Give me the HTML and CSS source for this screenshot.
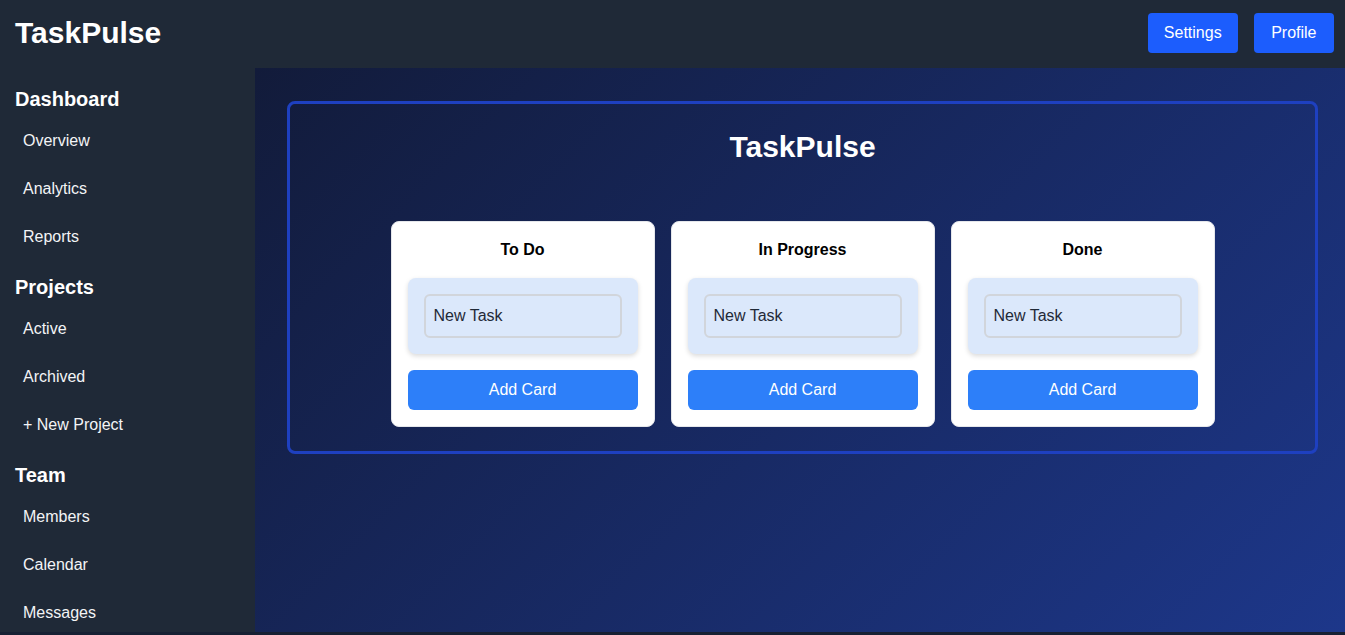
FILE: index.html
```html
<!DOCTYPE html>
<html lang="en">
<head>
<meta charset="utf-8">
<title>TaskPulse</title>
<link rel="stylesheet" href="styles.css">
</head>
<body>
<div class="app">
  <header class="topbar">
    <div class="brand">TaskPulse</div>
    <nav class="top-actions">
      <button class="top-btn">Settings</button>
      <button class="top-btn">Profile</button>
    </nav>
  </header>
  <div class="body-row">
    <aside class="sidebar">
      <h2 class="side-heading">Dashboard</h2>
      <ul class="side-list">
        <li>Overview</li>
        <li>Analytics</li>
        <li>Reports</li>
      </ul>
      <h2 class="side-heading">Projects</h2>
      <ul class="side-list">
        <li>Active</li>
        <li>Archived</li>
        <li>+ New Project</li>
      </ul>
      <h2 class="side-heading">Team</h2>
      <ul class="side-list">
        <li>Members</li>
        <li>Calendar</li>
        <li>Messages</li>
      </ul>
    </aside>
    <main class="main">
      <section class="board">
        <h1 class="board-title">TaskPulse</h1>
        <div class="columns">
          <div class="column">
            <h3 class="col-title">To Do</h3>
            <div class="task-card"><input class="task-input" type="text" value="New Task"></div>
            <button class="add-btn">Add Card</button>
          </div>
          <div class="column">
            <h3 class="col-title">In Progress</h3>
            <div class="task-card"><input class="task-input" type="text" value="New Task"></div>
            <button class="add-btn">Add Card</button>
          </div>
          <div class="column">
            <h3 class="col-title">Done</h3>
            <div class="task-card"><input class="task-input" type="text" value="New Task"></div>
            <button class="add-btn">Add Card</button>
          </div>
        </div>
      </section>
    </main>
  </div>
</div>
</body>
</html>
```
FILE: styles.css
```css
* { box-sizing: border-box; }
html, body {
  margin: 0;
  padding: 0;
  height: 100%;
}
body {
  background: #172033;
  font-family: "Liberation Sans", Arial, sans-serif;
  color: #fff;
  overflow: hidden;
}
.app {
  height: 632px;
  display: flex;
  flex-direction: column;
}
.topbar {
  height: 68px;
  flex: none;
  background: #1f2937;
  display: flex;
  align-items: center;
  justify-content: space-between;
  padding: 0 11px 0 15px;
}
.brand {
  font-size: 30px;
  font-weight: 700;
  color: #fff;
  margin-top: -2px;
}
.top-actions {
  display: flex;
  gap: 16px;
  margin-top: -2px;
}
.top-btn {
  height: 40px;
  padding: 0 16px;
  border: none;
  border-radius: 4px;
  background: #1c5dfd;
  color: #fff;
  font-family: inherit;
  font-size: 16px;
}
.top-btn:last-child { padding: 0 17.5px; }
.body-row {
  flex: 1;
  display: flex;
  min-height: 0;
}
.sidebar {
  width: 255px;
  flex: none;
  background: #1f2937;
  padding: 18px 15px 0;
}
.side-heading {
  margin: 0;
  font-size: 20px;
  font-weight: 700;
  line-height: 26px;
}
.side-list {
  list-style: none;
  margin: 5px 0 13px;
  padding: 0;
}
.side-list li {
  font-size: 16px;
  line-height: 18px;
  padding: 15px 8px;
  color: #f3f4f6;
}
.main {
  flex: 1;
  background: linear-gradient(135deg, #121b3a 0%, #1d378a 100%);
  padding: 33px 27px 0 32px;
}
.board {
  border: 3px solid #1e40c0;
  border-radius: 8px;
  padding: 24px;
}
.board-title {
  margin: 0 0 55px;
  text-align: center;
  font-size: 30px;
  line-height: 38px;
  font-weight: 700;
}
.columns {
  display: flex;
  justify-content: center;
  gap: 16px;
}
.column {
  width: 264px;
  background: #fff;
  border: 1px solid #e5e7eb;
  border-radius: 8px;
  padding: 16px;
  display: flex;
  flex-direction: column;
}
.col-title {
  margin: 0 0 16px;
  text-align: center;
  color: #000;
  font-size: 16px;
  line-height: 24px;
  font-weight: 700;
}
.task-card {
  background: #dbe8fb;
  border-radius: 8px;
  padding: 16px;
  box-shadow: 0 2px 5px rgba(0, 0, 0, 0.15);
  margin-bottom: 16px;
}
.task-input {
  display: block;
  width: 100%;
  height: 44px;
  border: 2px solid #d1d5db;
  border-radius: 6px;
  background: transparent;
  padding: 0 8px;
  font-family: inherit;
  font-size: 16px;
  color: #1f2937;
}
.add-btn {
  height: 40px;
  border: none;
  border-radius: 6px;
  background: #2d7ff9;
  color: #fff;
  font-family: inherit;
  font-size: 16px;
}
```
